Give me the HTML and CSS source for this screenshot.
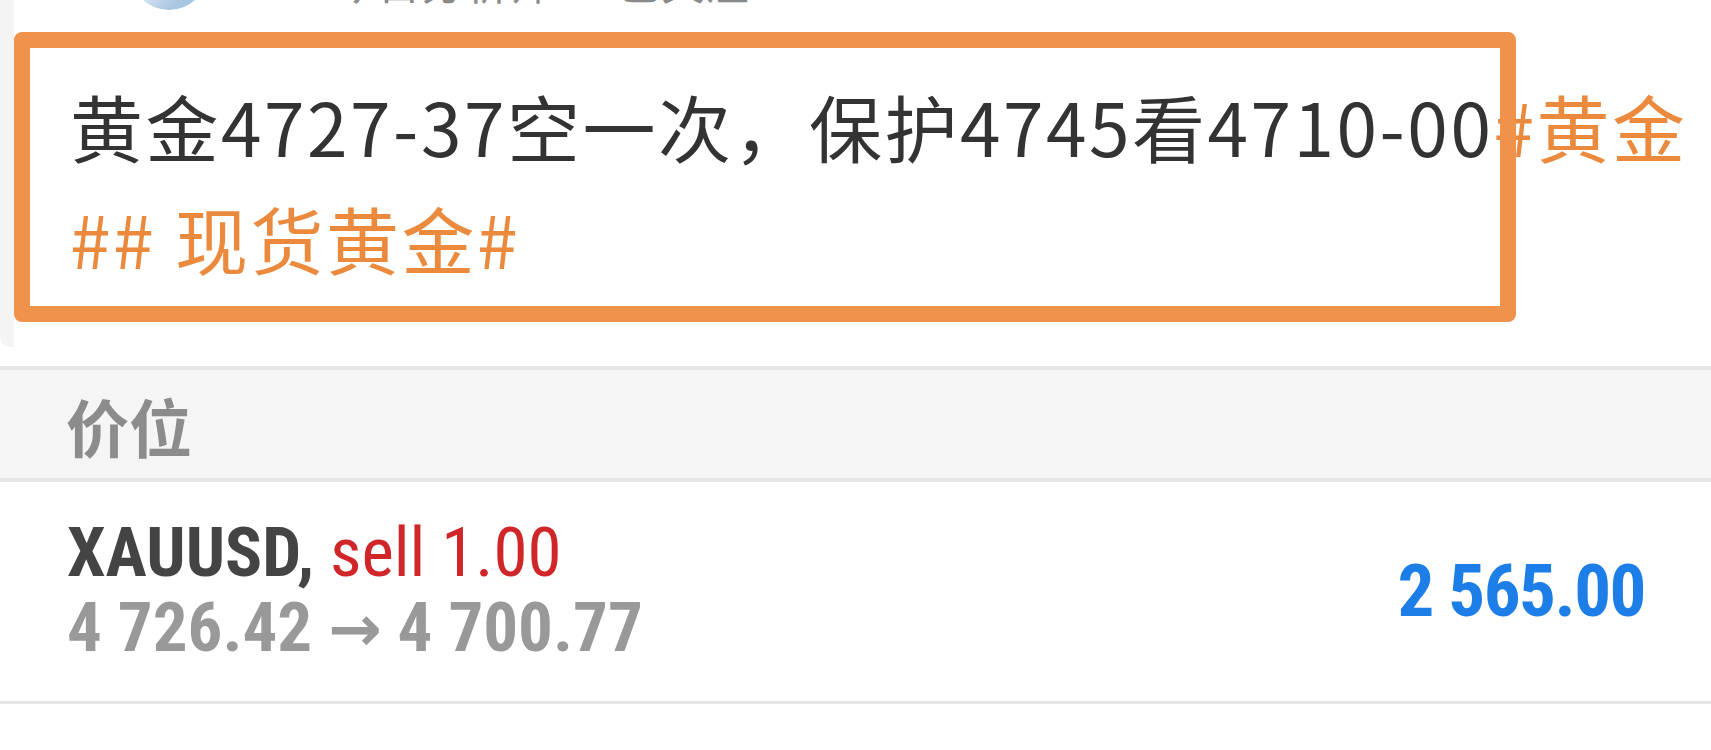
FILE: index.html
```html
<!DOCTYPE html>
<html lang="zh-CN">
<head>
<meta charset="utf-8"/>
<meta content="width=device-width, initial-scale=1.0" name="viewport"/>
<title>黄金 交易记录</title>
<link rel="stylesheet" href="styles.css">
</head>
<body>
<div class="post">
  <div class="post-edge"></div>
  <div class="post-main">
    <div class="author">
      <div class="avatar"></div>
      <div class="author-name">今日分析师 · 已关注</div>
    </div>
    <p class="post-text">黄金4727-37空一次，保护4745看4710-00<span class="tag">#黄金## 现货黄金#</span></p>
  </div>
  <div class="mark"></div>
</div>

<div class="section-head">价位</div>

<div class="deal">
  <div class="deal-info">
    <div class="deal-title">XAUUSD, <span class="sell">sell 1.00</span></div>
    <div class="deal-prices">4 726.42 <span class="arrow">→</span> 4 700.77</div>
  </div>
  <div class="deal-profit">2 565.00</div>
</div>

<div class="deal deal-next">
  <div class="deal-info">
    <div class="deal-title">XAUUSD, <span class="buy">buy 1.00</span></div>
    <div class="deal-prices">4 700.77 <span class="arrow">→</span> 4 715.20</div>
  </div>
  <div class="deal-profit">1 443.00</div>
</div>
</body>
</html>
```

FILE: styles.css
```css
  body {
    margin: 0;
    background: #ffffff;
    font-family: "Noto Sans CJK SC", "Noto Sans", sans-serif;
    color: #333333;
  }
  .post {
    position: relative;
    display: flex;
    height: 347px;
  }
  .post-edge {
    width: 14px;
    background: #f4f4f4;
    border-bottom-left-radius: 10px;
  }
  .post-main {
    flex: 1;
    padding: 0 11px 0 56px;
  }
  .author {
    height: 69px;
    overflow: hidden;
    display: flex;
    align-items: flex-start;
  }
  .avatar {
    width: 78px;
    height: 78px;
    margin: -68px 0 0 60px;
    border-radius: 50%;
    background: linear-gradient(135deg, #e9eff5 40%, #a9c6e0 75%);
  }
  .author-name {
    margin: -46px 0 0 125px;
    font-size: 44px;
    line-height: 54px;
    color: #8a8a8a;
  }
  .post-text {
    margin: 0;
    font-size: 73px;
    line-height: 112px;
    letter-spacing: 2.5px;
    color: #333333;
  }
  .tag {
    color: #eb8a3d;
  }
  .mark {
    position: absolute;
    left: 14px;
    top: 32px;
    width: 1502px;
    height: 290px;
    box-sizing: border-box;
    border: 16px solid #ef924b;
    border-radius: 8px;
  }
  .section-head {
    margin-top: 19px;
    height: 108px;
    padding-left: 66px;
    display: flex;
    align-items: center;
    border-top: 4px solid #e6e6e6;
    border-bottom: 4px solid #e6e6e6;
    background: #f5f5f5;
    font-size: 63px;
    font-weight: bold;
    color: #8c8c8c;
  }
  .deal {
    display: flex;
    align-items: center;
    justify-content: space-between;
    padding: 33px 66px 34px 67px;
    border-bottom: 3px solid #e6e6e6;
    font-family: "Roboto Condensed", "Liberation Sans Narrow", Roboto, sans-serif;
    font-size: 69px;
    line-height: 75px;
  }
  .deal-next {
    padding-top: 42px;
  }
  .deal-title {
    font-weight: bold;
    color: #444444;
  }
  .sell {
    font-weight: normal;
    color: #d0262a;
  }
  .buy {
    font-weight: normal;
    color: #1c7ee6;
  }
  .deal-prices {
    font-weight: bold;
    color: #999999;
  }
  .arrow {
    font-family: "DejaVu Sans", sans-serif;
    font-size: 64px;
    font-weight: bold;
  }
  .deal-profit {
    font-weight: bold;
    font-size: 73px;
    letter-spacing: -1.5px;
    color: #1c7ee6;
  }
```
